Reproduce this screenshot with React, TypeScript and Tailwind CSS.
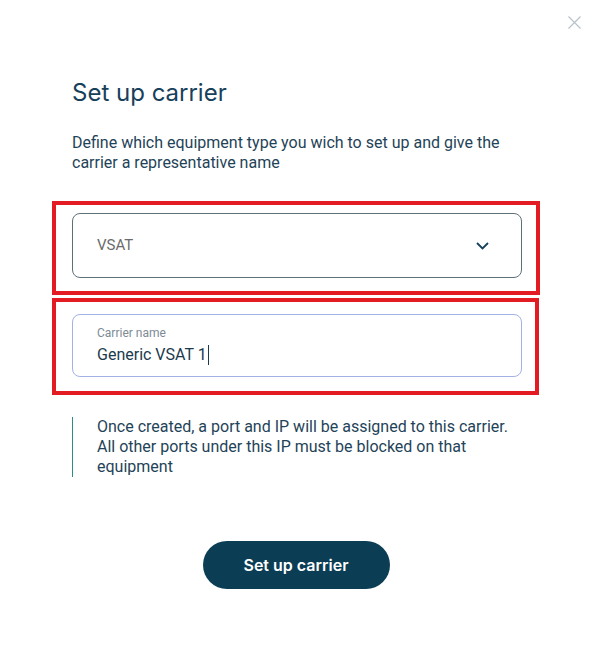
export default function App() {
  return (
    <div className="relative h-[667px] w-full bg-white font-['Roboto','Liberation_Sans',sans-serif]">
      <button
        type="button"
        aria-label="Close"
        className="absolute right-[16px] top-[16px] flex h-[13px] w-[13px] items-center justify-center"
      >
        <svg width="13" height="13" viewBox="0 0 13 13" fill="none">
          <path d="M0.5 0.5L12.5 12.5M12.5 0.5L0.5 12.5" stroke="#b9c2c8" strokeWidth="1.2" />
        </svg>
      </button>

      <div className="flex flex-col pl-[52px] pr-[57px] pt-[77px]">
        <h1 className="pl-5 font-['Inter',sans-serif] text-[24px] font-normal leading-[32px] text-[#17405a]">
          Set up carrier
        </h1>
        <p className="mt-6 pl-5 text-[16px] leading-[20px] text-[#1f4358]">
          Define which equipment type you wich to set up and give the carrier a representative name
        </p>

        <div className="mt-[28px] border-4 border-[#e31b23] pb-[13px] pl-4 pr-[14px] pt-2">
          <div className="flex h-[65px] items-center justify-between rounded-[8px] border border-[#5f6f7a] pl-6 pr-[32px]">
            <span className="text-[15px] text-[#6b6b6b]">VSAT</span>
            <svg width="13" height="8" viewBox="0 0 13 8" fill="none">
              <path d="M1 1L6.5 6.5L12 1" stroke="#17405a" strokeWidth="1.8" />
            </svg>
          </div>
        </div>

        <div className="mr-px mt-[3px] border-4 border-[#e31b23] pb-[14px] pl-4 pr-[13px] pt-3">
          <div className="flex h-[63px] flex-col rounded-[8px] border border-[#a3b1e6] pl-6 pt-[10px]">
            <span className="text-[12px] leading-[16px] text-[#7d8b95]">Carrier name</span>
            <div className="mt-[3px] flex items-center text-[16px] leading-[22px] text-[#1b3a4e]">
              <span>Generic VSAT 1</span>
              <span className="ml-px h-[20px] w-px bg-[#1b3a4e]" />
            </div>
          </div>
        </div>

        <div className="ml-5 mr-[18px] mt-[22px] border-l-[1.5px] border-[#2f8b8a] pl-6 text-[16px] leading-[20px] text-[#1f4358]">
          Once created, a port and IP will be assigned to this carrier. All other ports under this IP must be blocked on that equipment
        </div>

        <button
          type="submit"
          className="mt-16 h-12 w-[187px] self-center rounded-full bg-[#0b3d55] font-['Inter',sans-serif] text-[16px] font-semibold text-white"
        >
          Set up carrier
        </button>
      </div>
    </div>
  );
}
